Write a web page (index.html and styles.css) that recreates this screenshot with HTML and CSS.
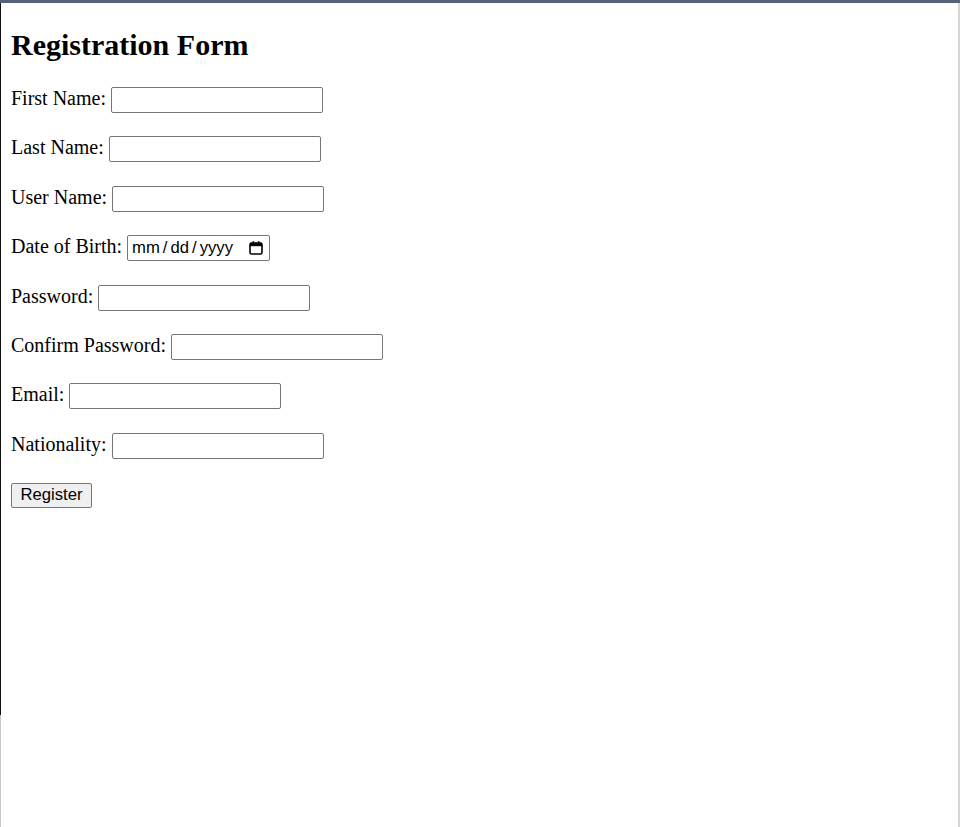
FILE: index.html
```html
<!DOCTYPE html>
<html lang="en">
<head>
<meta charset="utf-8">
<title>Registration Form</title>
<link rel="stylesheet" href="styles.css">
</head>
<body>
<div class="frame">
  <div class="page">
    <h2 class="title">Registration Form</h2>
    <form class="form">
      <p class="row"><label for="fn">First Name:</label> <input class="field" id="fn" type="text"></p>
      <p class="row"><label for="ln">Last Name:</label> <input class="field" id="ln" type="text"></p>
      <p class="row"><label for="un">User Name:</label> <input class="field" id="un" type="text"></p>
      <p class="row"><label for="dob">Date of Birth:</label> <span class="date" id="dob"><span class="date-text">mm<span class="sep">/</span>dd<span class="sep">/</span>yyyy</span><svg class="cal" width="16" height="16" viewBox="0 0 16 16"><rect x="2" y="3" width="12" height="11" rx="1.5" fill="none" stroke="#000" stroke-width="1.6"/><rect x="2" y="3" width="12" height="3.2" fill="#000"/><rect x="4.5" y="1.2" width="1.6" height="2.6" fill="#000"/><rect x="9.9" y="1.2" width="1.6" height="2.6" fill="#000"/></svg></span></p>
      <p class="row"><label for="pw">Password:</label> <input class="field" id="pw" type="password"></p>
      <p class="row"><label for="cpw">Confirm Password:</label> <input class="field" id="cpw" type="password"></p>
      <p class="row"><label for="em">Email:</label> <input class="field" id="em" type="text"></p>
      <p class="row"><label for="na">Nationality:</label> <input class="field" id="na" type="text"></p>
      <p class="row"><button class="btn" type="button">Register</button></p>
    </form>
  </div>
</div>
</body>
</html>
```

FILE: styles.css
```css
html, body {
  margin: 0;
  padding: 0;
  background: #fff;
}

.frame {
  box-sizing: border-box;
  height: 827px;
  border-top: 3px solid #56627a;
  background:
    linear-gradient(#111, #111) left top / 1px 712px no-repeat,
    linear-gradient(#c8c8c4, #c8c8c4) left bottom / 1px 112px no-repeat,
    linear-gradient(#d6d6d2, #d6d6d2) right top / 2px 100% no-repeat,
    #fff;
  overflow: hidden;
}

.page {
  padding: 1px 10px 10px 11px;
  font-family: "Liberation Serif", "Times New Roman", serif;
  font-size: 20px;
  color: #000;
}

.title {
  font-size: 30px;
  font-weight: bold;
  margin: 24px 0 25px;
}

.form {
  margin: 0;
}

.row {
  margin: 20px 0;
  height: 29.4px;
}

.field {
  box-sizing: border-box;
  width: 212px;
  height: 26px;
  margin: 0;
  padding: 1px 3px;
  border: 1px solid #767676;
  border-radius: 2px;
  font-family: "Liberation Sans", Arial, sans-serif;
  font-size: 16.67px;
  vertical-align: baseline;
  background: #fff;
}

.date {
  box-sizing: border-box;
  display: inline-flex;
  align-items: center;
  justify-content: space-between;
  width: 143px;
  height: 26px;
  padding: 0 5px 0 4px;
  border: 1px solid #767676;
  border-radius: 2px;
  font-family: "Liberation Sans", Arial, sans-serif;
  font-size: 16.67px;
  vertical-align: baseline;
  background: #fff;
}

.sep {
  margin: 0 3px;
}

.cal {
  display: block;
}

.btn {
  box-sizing: border-box;
  height: 25px;
  width: 81px;
  margin: 0;
  padding: 0 7px;
  border: 1px solid #767676;
  border-radius: 2px;
  background: #efefef;
  font-family: "Liberation Sans", Arial, sans-serif;
  font-size: 16.67px;
  color: #000;
}
```
